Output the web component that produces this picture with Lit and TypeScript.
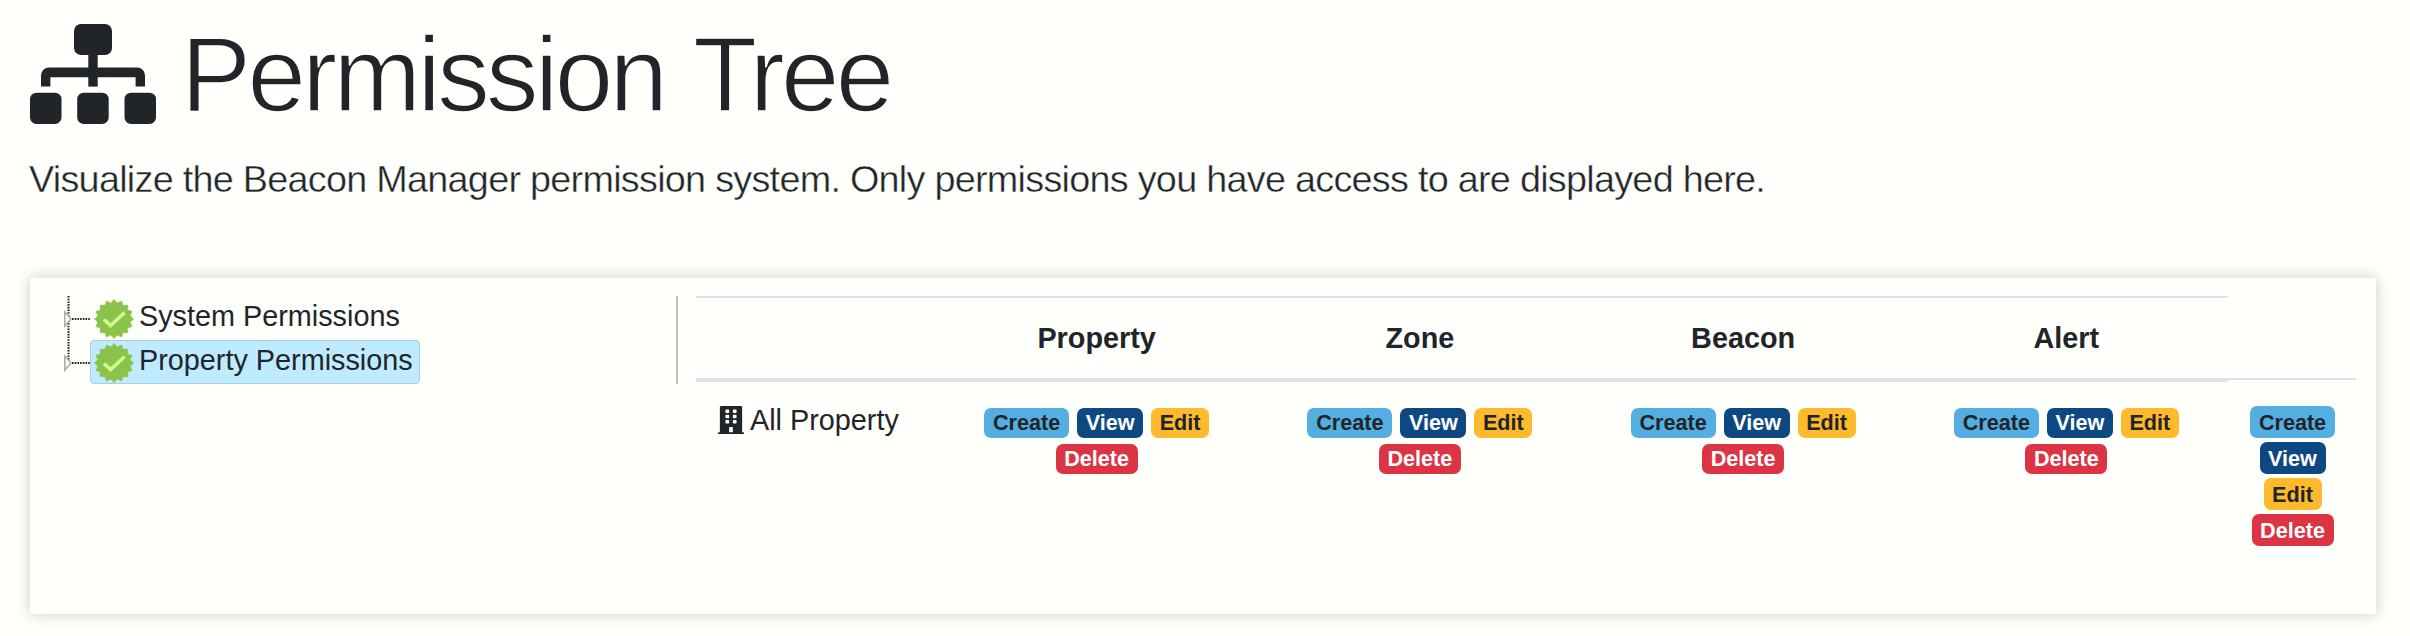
import { LitElement, html, svg, css } from "lit";
import { customElement } from "lit/decorators.js";

const ACTIONS = ["Create", "View", "Edit", "Delete"];
const COLUMNS = ["Property", "Zone", "Beacon", "Alert"];
const TREE = [
  { label: "System Permissions", selected: false },
  { label: "Property Permissions", selected: true },
];

// Sixteen-pointed seal outline centred on the origin.
const sealPoints = Array.from({ length: 32 }, (_, i) => {
  const r = i % 2 ? 16.4 : 19.6;
  const a = (i * Math.PI) / 16;
  return `${(r * Math.sin(a)).toFixed(2)},${(-r * Math.cos(a)).toFixed(2)}`;
}).join(" ");

const seal = html`<svg class="seal" viewBox="-20 -20 40 40">
  <polygon points=${sealPoints} fill="#8bc34a" stroke="#8bc34a" stroke-width="0.6" stroke-linejoin="round" />
  <polyline points="-10,0.4 -3.4,6.6 10.6,-6.6" fill="none" stroke="#ccff90" stroke-width="3.4" />
</svg>`;

const sitemap = html`<svg class="sitemap" viewBox="0 0 126 100">
  <rect x="44" y="0" width="38" height="31" rx="7" />
  <rect x="0" y="68.7" width="31.5" height="31.3" rx="6.5" />
  <rect x="47.2" y="68.7" width="31.5" height="31.3" rx="6.5" />
  <rect x="94.5" y="68.7" width="31.5" height="31.3" rx="6.5" />
  <rect x="58.3" y="30" width="9.4" height="32.6" />
  <path d="M11 62.6V51.5a8 8 0 0 1 8-8h88a8 8 0 0 1 8 8v11.1h-9.4v-9.4H20.4v9.4z" />
</svg>`;

const building = html`<svg class="building" viewBox="0 0 448 512" preserveAspectRatio="none">
  <path
    fill-rule="evenodd"
    d="M436 480h-20V24c0-13.300-10.700-24-24-24H56C42.700 0 32 10.700 32 24v456H12c-6.600 0-12 5.400-12 12v20h448v-20c0-6.600-5.400-12-12-12zM128 76c0-6.600 5.400-12 12-12h40c6.600 0 12 5.400 12 12v40c0 6.600-5.400 12-12 12h-40c-6.600 0-12-5.400-12-12V76zm0 96c0-6.600 5.400-12 12-12h40c6.600 0 12 5.400 12 12v40c0 6.600-5.400 12-12 12h-40c-6.600 0-12-5.400-12-12v-40zm52 148h-40c-6.600 0-12-5.400-12-12v-40c0-6.600 5.400-12 12-12h40c6.600 0 12 5.400 12 12v40c0 6.600-5.400 12-12 12zm76 160h-64v-84c0-6.600 5.400-12 12-12h40c6.600 0 12 5.400 12 12v84zm64-172c0 6.600-5.400 12-12 12h-40c-6.600 0-12-5.400-12-12v-40c0-6.600 5.400-12 12-12h40c6.600 0 12 5.400 12 12v40zm0-96c0 6.600-5.400 12-12 12h-40c-6.600 0-12-5.400-12-12v-40c0-6.600 5.400-12 12-12h40c6.600 0 12 5.400 12 12v40zm0-96c0 6.600-5.400 12-12 12h-40c-6.600 0-12-5.400-12-12V76c0-6.600 5.400-12 12-12h40c6.600 0 12 5.400 12 12v40z"
  />
</svg>`;

// Dotted guides and expander arrows to the left of the tree rows.
const guides = html`<svg class="guides" viewBox="0 0 30 88">
  <g stroke="#222" stroke-width="2" fill="none" stroke-dasharray="1.6 1.1">
    <path d="M8.500 0V66" />
    <path d="M12 23H30M12 67H30" />
  </g>
  ${[23, 67].map(
    (y) => svg`<path d=${`M4.800 ${y - 7}L11 ${y}L4.800 ${y + 7}Z`} fill="#fffffd" stroke="#aaa" stroke-width="1.500" />`
  )}
</svg>`;

const badge = (a: string) => html`<span class="badge ${a.toLowerCase()}">${a}</span>`;

@customElement("app-root")
export class AppRoot extends LitElement {
  static styles = css`
    :host {
      display: block;
      box-sizing: border-box;
      height: 636px;
      padding: 24px 34px 22px 30px;
      overflow: hidden;
      background: #fffffc;
      color: #212529;
      font: 28.800px/44px "Liberation Sans", Arial, sans-serif;
    }
    svg { display: block; flex: none; }
    .sitemap { width: 126px; height: 100px; fill: #212529; }
    .heading { display: flex; height: 100px; }
    h1 {
      margin: -9px 0 0 25px;
      font-size: 105px;
      line-height: 120px;
      font-weight: 400;
      letter-spacing: -3.600px;
      word-spacing: 5px;
      white-space: nowrap;
      -webkit-text-stroke: 1.600px #fffffc;
    }
    .lead {
      margin: 33px 0 0 -1px;
      height: 121px;
      font-size: 37.800px;
      line-height: 44px;
      letter-spacing: -0.740px;
      white-space: nowrap;
      -webkit-text-stroke: 0.400px #fffffc;
    }
    .card {
      display: flex;
      align-items: flex-start;
      box-sizing: border-box;
      width: 2346px;
      height: 336px;
      padding: 18px 20px 0 30px;
      background: #fffffc;
      box-shadow: 0 0 14px rgba(0, 0, 0, 0.22);
    }
    .tree {
      display: flex;
      flex: none;
      box-sizing: border-box;
      width: 618px;
      height: 88px;
      border-right: 2px solid #bdbdbd;
    }
    .guides { width: 30px; height: 88px; }
    .node {
      display: flex;
      align-items: center;
      box-sizing: border-box;
      width: max-content;
      height: 44px;
      border: 1px solid transparent;
      border-radius: 4px;
      padding: 0 6px 0 3px;
      gap: 5px;
      white-space: nowrap;
    }
    .node.selected { background: #beebff; border-color: #a9cfe0; width: 330px; }
    .seal { width: 40px; height: 40px; margin-top: 1px; }
    .node-label { margin-top: -4px; }
    .grid {
      display: grid;
      grid-template-columns: 239px repeat(4, 323.250px);
      margin-left: 18px;
    }
    .head {
      box-sizing: border-box;
      height: 86px;
      border-top: 2px solid #dee1e8;
      border-bottom: 4px solid #dee1e8;
      text-align: center;
      font-weight: 700;
      line-height: 80px;
    }
    .name { display: flex; gap: 6px; padding: 16px 0 0 22px; white-space: nowrap; }
    .building { width: 26px; height: 28px; margin-top: 8px; fill: #212529; }
    .cell {
      display: flex;
      flex-wrap: wrap;
      justify-content: center;
      align-content: flex-start;
      gap: 6px 8px;
      padding: 26px 45px 0 45px;
    }
    .extra {
      display: flex;
      flex-direction: column;
      align-items: center;
      gap: 4px;
      box-sizing: border-box;
      width: 128px;
      margin-top: 82px;
      padding: 26px 0 0 1px;
      border-top: 2px solid #dee1e8;
    }
    .badge {
      box-sizing: border-box;
      height: 30px;
      border-radius: 7px;
      text-align: center;
      font-size: 21.600px;
      font-weight: 700;
      line-height: 29px;
    }
    .extra .badge { height: 32px; line-height: 33px; }
    .create { width: 85px; background: #54aee1; }
    .view { width: 66px; background: #0d4882; color: #fff; }
    .edit { width: 58px; background: #ffb92d; }
    .delete { width: 82px; background: #dd3444; color: #fff; }
  `;

  render() {
    return html`
      <header class="heading">${sitemap}<h1>Permission Tree</h1></header>
      <p class="lead">Visualize the Beacon Manager permission system. Only permissions you have access to are displayed here.</p>
      <section class="card">
        <nav class="tree">
          ${guides}
          <div>
            ${TREE.map(
              (n) => html`<div class="node ${n.selected ? "selected" : ""}">${seal}<span class="node-label">${n.label}</span></div>`
            )}
          </div>
        </nav>
        <div class="grid">
          <div class="head"></div>
          ${COLUMNS.map((c) => html`<div class="head">${c}</div>`)}
          <div class="name">${building}<span>All Property</span></div>
          ${COLUMNS.map(() => html`<div class="cell">${ACTIONS.map(badge)}</div>`)}
        </div>
        <div class="extra">${ACTIONS.map(badge)}</div>
      </section>
    `;
  }
}
